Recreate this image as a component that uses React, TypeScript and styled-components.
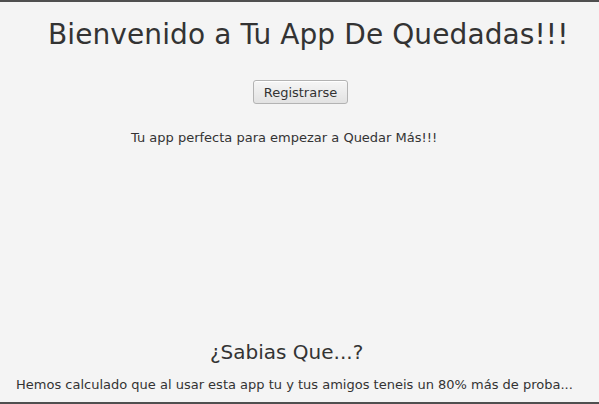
import React from "react";
import styled, { createGlobalStyle } from "styled-components";

const Global = createGlobalStyle`
  html, body { margin: 0; padding: 0; background: #f4f4f4; }
  body { font-family: "DejaVu Sans", "Liberation Sans", sans-serif; color: #333; }
`;

const Frame = styled.div`
  width: 599px;
  height: 404px;
  box-sizing: border-box;
  border-top: 2px solid #4f4f4f;
  border-bottom: 2px solid #4f4f4f;
  background: #f4f4f4;
  display: flex;
  flex-direction: column;
  overflow: hidden;
`;

const Title = styled.h1`
  margin: 0;
  padding: 16px 0 0 48px;
  font-size: 28px;
  letter-spacing: 0.1px;
  font-weight: normal;
  line-height: 34px;
  color: #333;
  white-space: nowrap;
`;

const ButtonRow = styled.div`
  display: flex;
  justify-content: center;
  padding: 28px 0 0 2px;
`;

const Button = styled.button`
  font-family: inherit;
  font-size: 13px;
  color: #333;
  height: 24px;
  padding: 0 10px;
  border: 1px solid #b3b3b3;
  border-radius: 3px;
  background: linear-gradient(#f6f6f6, #e2e2e2);
  box-shadow: inset 0 1px 0 #fff;
`;

const Lead = styled.p`
  margin: 0;
  padding: 26px 0 0 131px;
  font-size: 13px;
  line-height: 16px;
  color: #333;
`;

const Spacer = styled.div`
  flex: 1;
`;

const Heading = styled.h2`
  margin: 0 0 3px;
  padding-left: 210px;
  font-size: 20px;
  font-weight: normal;
  line-height: 24px;
  color: #333;
`;

const Fact = styled.p`
  margin: 0;
  padding: 10px 0 9px 16px;
  font-size: 13px;
  line-height: 16px;
  color: #333;
  white-space: nowrap;
`;

export default function App() {
  return (
    <>
      <Global />
      <Frame>
        <Title>Bienvenido a Tu App De Quedadas!!!</Title>
        <ButtonRow>
          <Button>Registrarse</Button>
        </ButtonRow>
        <Lead>Tu app perfecta para empezar a Quedar Más!!!</Lead>
        <Spacer />
        <Heading>¿Sabias Que...?</Heading>
        <Fact>Hemos calculado que al usar esta app tu y tus amigos teneis un 80% más de proba...</Fact>
      </Frame>
    </>
  );
}
